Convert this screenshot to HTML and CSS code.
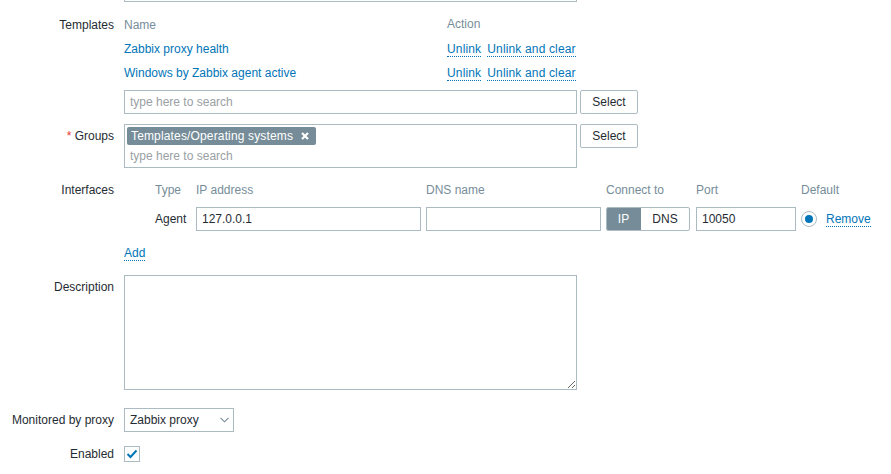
FILE: index.html
```html
<!DOCTYPE html>
<html>
<head>
<meta charset="utf-8">
<link rel="stylesheet" href="styles.css">
</head>
<body>
<div class="form">
  <div class="prev-field"></div>

  <div class="row row-templates">
    <div class="label label-tpl">Templates</div>
    <div class="field">
      <div class="tpl-table">
        <div class="tpl-name th">Name</div>
        <div class="th">Action</div>
        <div class="tpl-name"><a class="plain">Zabbix proxy health</a></div>
        <div class="actions"><a class="dotted">Unlink</a><a class="dotted">Unlink and clear</a></div>
        <div class="tpl-name"><a class="plain">Windows by Zabbix agent active</a></div>
        <div class="actions"><a class="dotted">Unlink</a><a class="dotted">Unlink and clear</a></div>
      </div>
      <div class="with-btn search-line">
        <div class="input wide"><span class="placeholder">type here to search</span></div>
        <button class="btn">Select</button>
      </div>
    </div>
  </div>

  <div class="row">
    <div class="label"><span class="req">*</span> Groups</div>
    <div class="field with-btn">
      <div class="multiselect">
        <span class="tag">Templates/Operating systems<svg class="tag-x" width="8" height="8" viewBox="0 0 8 8"><path d="M1 1L7 7M7 1L1 7" stroke="#fff" stroke-width="2.2"/></svg></span>
        <div class="placeholder ms-ph">type here to search</div>
      </div>
      <button class="btn">Select</button>
    </div>
  </div>

  <div class="row">
    <div class="label">Interfaces</div>
    <div class="field">
      <div class="iface">
        <div class="th">Type</div>
        <div class="th">IP address</div>
        <div class="th">DNS name</div>
        <div class="th">Connect to</div>
        <div class="th">Port</div>
        <div class="th">Default</div>
        <div class="th"></div>

        <div class="cell">Agent</div>
        <div class="cell"><div class="input ip">127.0.0.1</div></div>
        <div class="cell"><div class="input dns"></div></div>
        <div class="cell"><div class="toggle"><span class="on">IP</span><span class="off">DNS</span></div></div>
        <div class="cell"><div class="input port">10050</div></div>
        <div class="cell"><span class="radio"><span class="dot"></span></span></div>
        <div class="cell"><a class="dotted">Remove</a></div>
      </div>
    </div>
  </div>

  <div class="row">
    <div class="label"></div>
    <div class="field"><a class="dotted">Add</a></div>
  </div>

  <div class="row row-desc">
    <div class="label">Description</div>
    <div class="field"><textarea class="textarea"></textarea></div>
  </div>

  <div class="row">
    <div class="label">Monitored by proxy</div>
    <div class="field">
      <div class="select">Zabbix proxy<svg class="chev" width="9" height="6" viewBox="0 0 9 6"><path d="M0.5 0.8L4.5 4.8L8.5 0.8" fill="none" stroke="#768d99" stroke-width="1.1"/></svg></div>
    </div>
  </div>

  <div class="row">
    <div class="label">Enabled</div>
    <div class="field check-field">
      <span class="checkbox"><svg width="12" height="10" viewBox="0 0 12 10"><path d="M1.5 5L4.5 8L10.5 1.5" fill="none" stroke="#0275b8" stroke-width="2"/></svg></span>
    </div>
  </div>
</div>
</body>
</html>
```

FILE: styles.css
```css
* { box-sizing: border-box; }
html, body { margin: 0; padding: 0; background: #fff; }
body {
  font-family: "Liberation Sans", Arial, sans-serif;
  font-size: 12px;
  color: #1f2c33;
}
.form { width: 891px; }
.prev-field {
  margin-left: 124px;
  width: 453px;
  height: 2px;
  border: 1px solid #acbbc2;
  border-top: none;
}
.row {
  display: grid;
  grid-template-columns: 114px 1fr;
  column-gap: 10px;
  margin-top: 10px;
}
.label {
  text-align: right;
  line-height: 24px;
  white-space: nowrap;
}
.label-tpl { padding-top: 1px; }
.req { color: #e33734; }
.field { line-height: 24px; }
.th { color: #768d99; line-height: 24px; }

.tpl-table {
  display: grid;
  grid-template-columns: 323px auto;
}
.tpl-name, .actions { line-height: 24px; height: 24px; padding-top: 1px; }
.tpl-table .th { height: 24px; }
a { color: #0275b8; text-decoration: none; }
a.dotted { border-bottom: 1px dotted #0275b8; line-height: 14px; }
.actions a { letter-spacing: 0.15px; }
.actions a + a { margin-left: 6px; }

.with-btn { display: flex; align-items: flex-start; }
.search-line { margin-top: 6px; }
.input {
  height: 24px;
  border: 1px solid #acbbc2;
  background: #fff;
  padding: 0 5px;
  line-height: 22px;
  white-space: nowrap;
}
.wide { width: 453px; }
.placeholder { color: #9aa0a4; }
.btn {
  margin-left: 3px;
  width: 58px;
  height: 24px;
  border: 1px solid #acbbc2;
  border-radius: 2px;
  background: #fff;
  color: #1f2c33;
  font-family: inherit;
  font-size: 12px;
  padding: 0;
}
.multiselect {
  width: 453px;
  height: 44px;
  border: 1px solid #acbbc2;
  padding: 2px 2px 0 2px;
  line-height: 18px;
}
.tag {
  display: inline-flex;
  align-items: center;
  height: 18px;
  background: #768d99;
  color: #fff;
  padding: 0 7px 0 4px;
  border-radius: 2px;
  letter-spacing: 0.15px;
}
.tag-x { margin-left: 8px; }
.ms-ph { padding-left: 3px; line-height: 20px; margin-top: 1px; }

.iface {
  padding-left: 31px;
  display: grid;
  grid-template-columns: 41px 230px 180px 90px 105px 25px auto;
  grid-template-rows: 24px 24px;
  row-gap: 5px;
}
.cell { display: flex; align-items: center; height: 24px; }
.ip { width: 225px; }
.dns { width: 175px; }
.port { width: 100px; }
.toggle {
  display: flex;
  width: 84px;
  height: 24px;
  border: 1px solid #acbbc2;
  border-radius: 2px;
  overflow: hidden;
  line-height: 22px;
}
.toggle .on {
  width: 35px;
  background: #768d99;
  color: #fff;
  text-align: center;
  margin: -1px 0 -1px -1px;
  line-height: 24px;
}
.toggle .off { flex: 1; text-align: center; }
.radio {
  width: 16px;
  height: 16px;
  border-radius: 50%;
  border: 1px solid #acbbc2;
  display: flex;
  align-items: center;
  justify-content: center;
}
.radio .dot {
  width: 8px;
  height: 8px;
  border-radius: 50%;
  background: #0275b8;
}

.row-desc { margin-bottom: 18px; }
.textarea {
  display: block;
  width: 453px;
  height: 115px;
  border: 1px solid #acbbc2;
  margin: 0;
  font-family: inherit;
  font-size: 12px;
  resize: both;
}
.select {
  width: 110px;
  height: 24px;
  border: 1px solid #acbbc2;
  padding: 0 4px 0 5px;
  line-height: 22px;
  display: flex;
  align-items: center;
  justify-content: space-between;
}
.check-field { display: flex; align-items: center; height: 24px; }
.checkbox {
  width: 16px;
  height: 16px;
  border: 1px solid #acbbc2;
  display: flex;
  align-items: center;
  justify-content: center;
}
```
